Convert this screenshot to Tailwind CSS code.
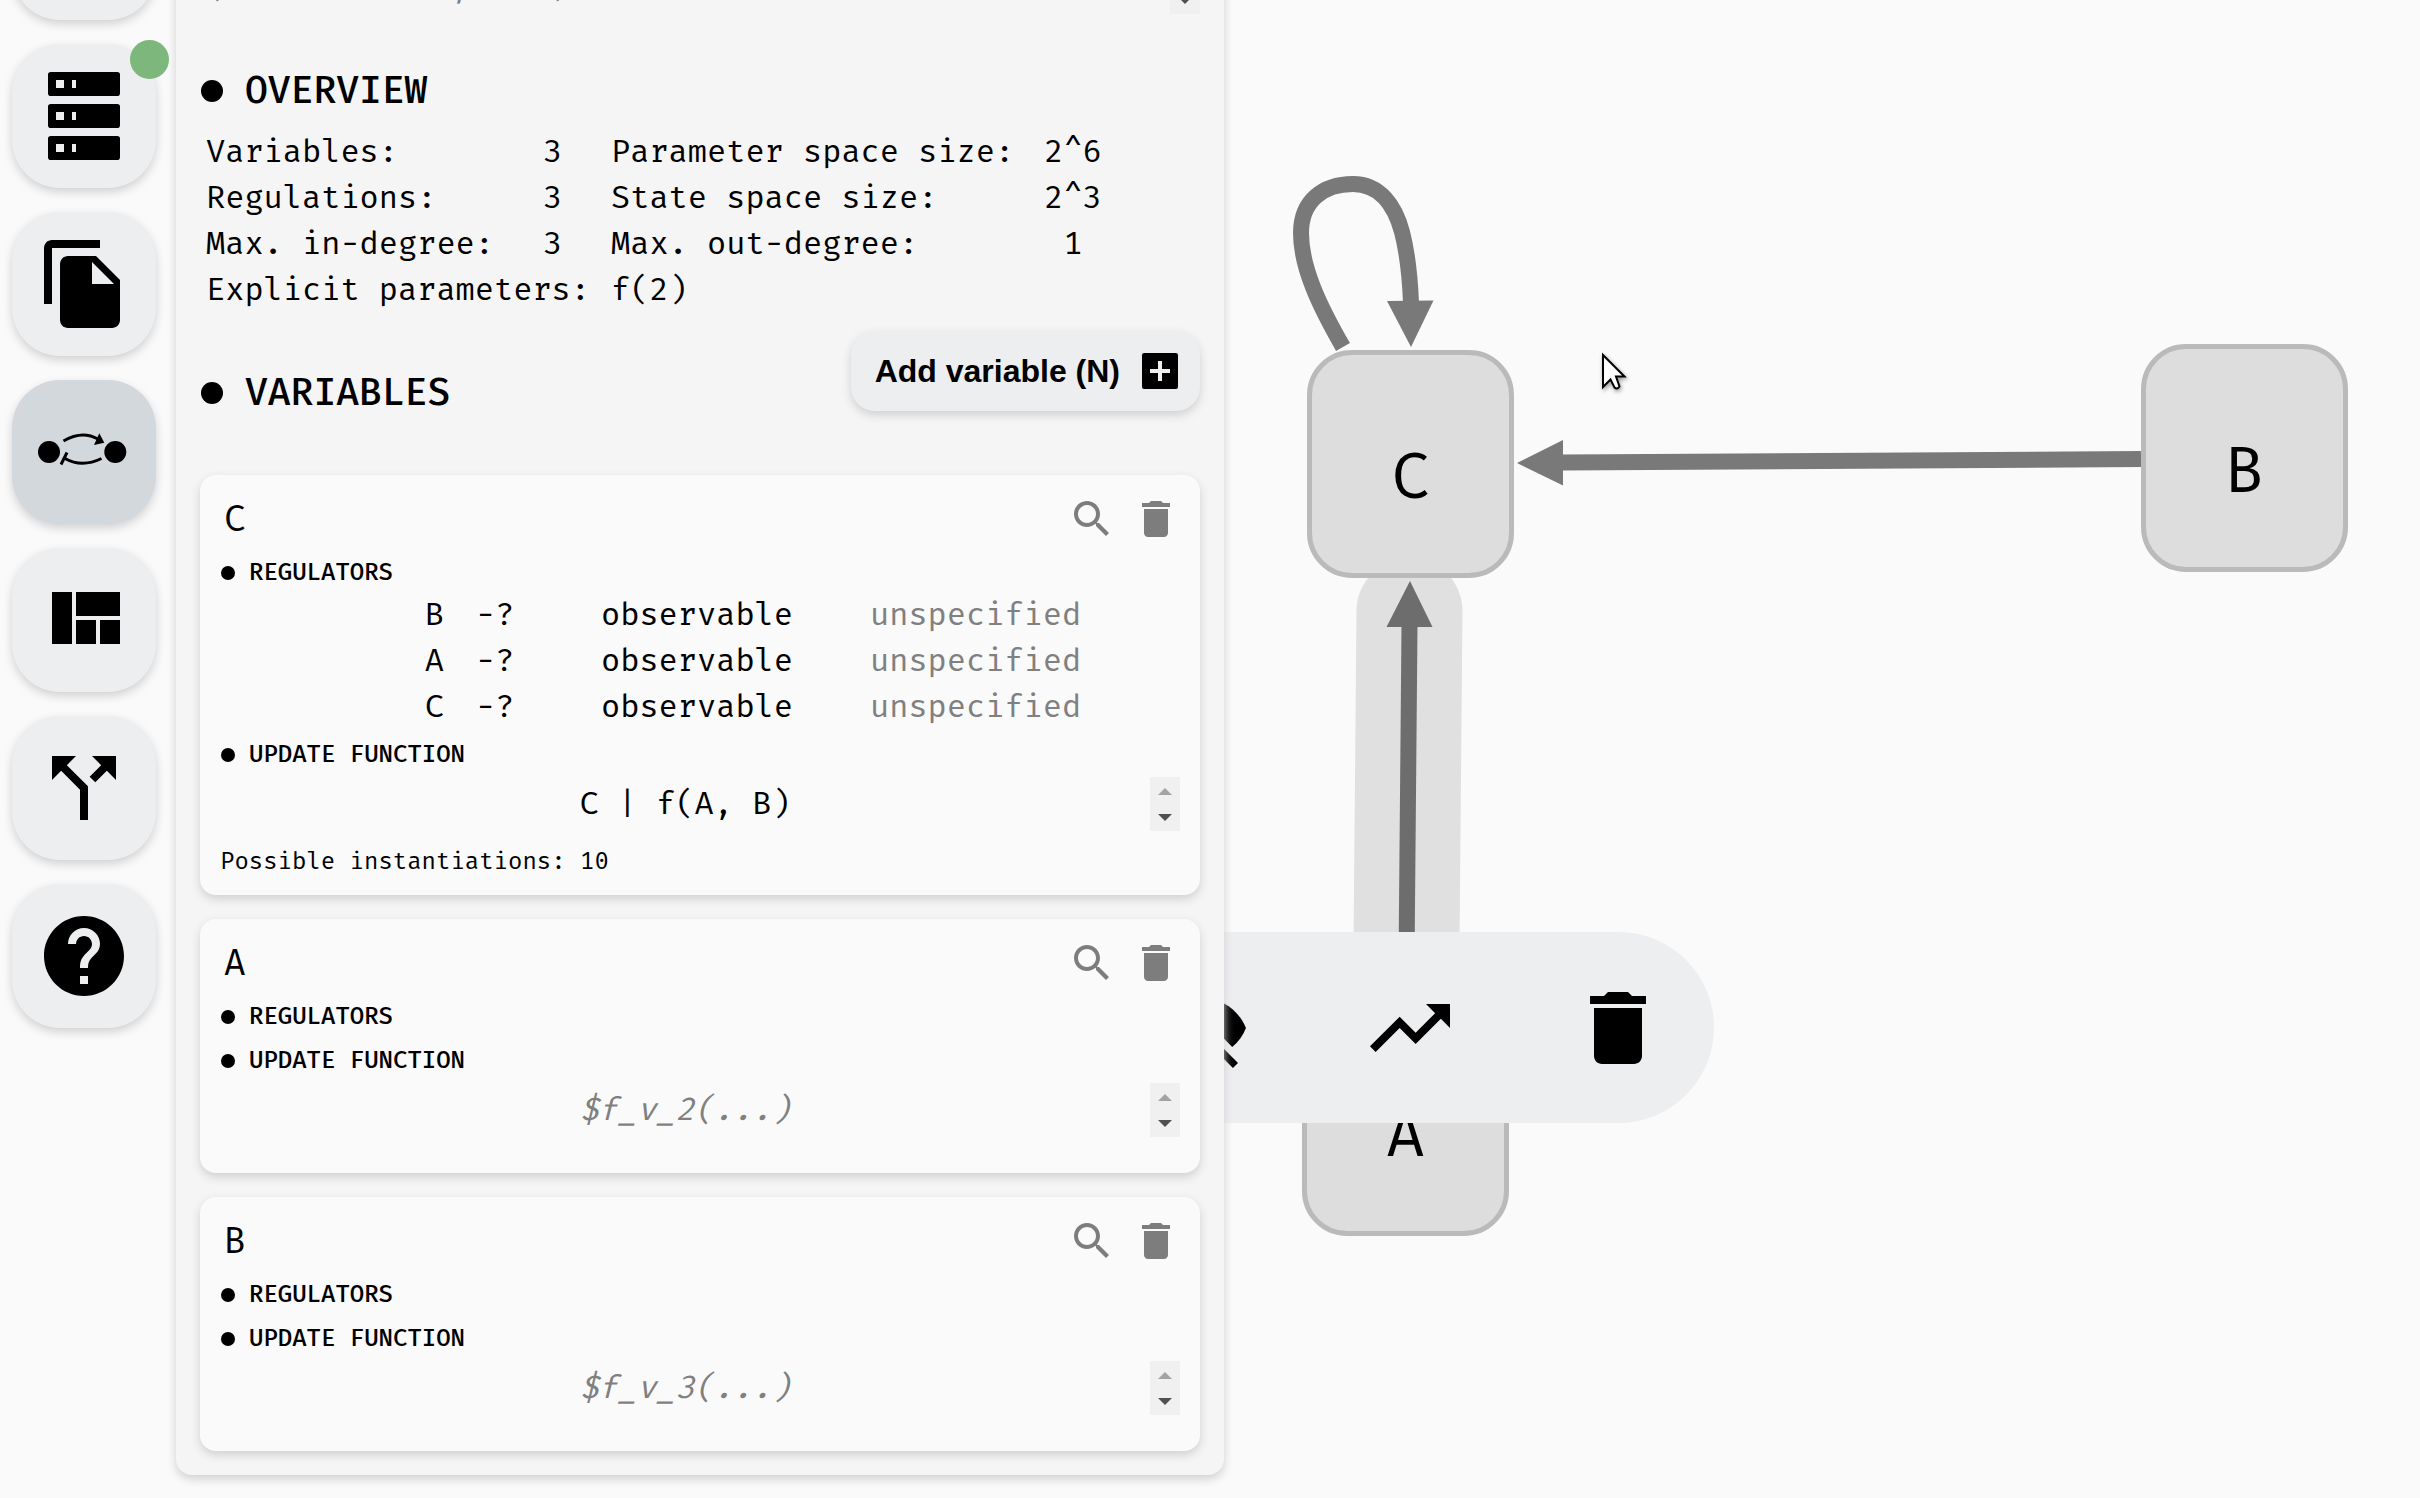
<!DOCTYPE html>
<html lang="en">
<head>
<meta charset="utf-8">
<meta name="viewport" content="width=device-width, initial-scale=1">
<title>Model editor</title>
<script src="https://cdn.jsdelivr.net/npm/@tailwindcss/browser@4"></script>
</head>
<body class="flex h-screen gap-5 overflow-hidden bg-[#fafafa] pl-3 font-['Fira_Mono','Liberation_Mono',monospace] text-[32px] leading-[46px] text-black">

<!-- shared icon shapes -->
<svg class="hidden" aria-hidden="true">
  <symbol id="search" viewBox="0 0 24 24"><path d="M15.5 14h-.79l-.28-.27C15.41 12.59 16 11.11 16 9.5 16 5.91 13.09 3 9.5 3S3 5.91 3 9.5 5.91 16 9.5 16c1.61 0 3.09-.59 4.23-1.57l.27.28v.79l5 4.99L20.49 19l-4.99-5zm-6 0C7.01 14 5 11.99 5 9.5S7.01 5 9.5 5 14 7.01 14 9.5 11.99 14 9.5 14z"/></symbol>
  <symbol id="trash" viewBox="0 0 24 24"><path d="M6 19c0 1.1.9 2 2 2h8c1.1 0 2-.9 2-2V7H6v12zM19 4h-3.5l-1-1h-5l-1 1H5v2h14V4z"/></symbol>
  <symbol id="arrows" viewBox="0 0 30 54"><path fill="#a3a3a3" d="M8 18l7-7 7 7z"/><path fill="#505050" d="M8 37h14l-7 7z"/></symbol>
</svg>

<nav class="-mt-[124px] flex w-36 shrink-0 flex-col gap-6" aria-label="Sections">
  <button class="size-36 shrink-0 rounded-[48px] bg-[#edeef0] shadow-[0_4px_10px_#d0d0d0]" aria-label="Engine"></button>
  <button class="relative flex size-36 shrink-0 items-center justify-center rounded-[48px] bg-[#edeef0] shadow-[0_4px_10px_#d0d0d0]" aria-label="Results">
    <svg class="size-24" viewBox="0 0 24 24" fill-rule="evenodd"><path d="M3.7 1h16.6q.7 0 .7.7v4.6q0 .7-.7.7H3.7q-.7 0-.7-.7V1.7q0-.7.7-.7zM5 3v2h2V3zM9 3v2h1V3zM3.7 9h16.6q.7 0 .7.7v4.6q0 .7-.7.7H3.7q-.7 0-.7-.7V9.7q0-.7.7-.7zM5 11v2h2v-2zM9 11v2h1v-2zM3.7 17h16.6q.7 0 .7.7v4.6q0 .7-.7.7H3.7q-.7 0-.7-.7v-4.6q0-.7.7-.7zM5 19v2h2v-2zM9 19v2h1v-2z"/></svg>
    <span class="absolute -top-1 -right-[13px] size-[39px] rounded-full bg-[#7db77b]"></span>
  </button>
  <button class="flex size-36 shrink-0 items-center justify-center rounded-[48px] bg-[#edeef0] shadow-[0_4px_10px_#d0d0d0]" aria-label="Import and export">
    <svg class="size-24" viewBox="0 0 24 24"><path d="M16 1H4c-1.1 0-2 .9-2 2v14h2V3h12V1zm-1 4l6 6v10c0 1.1-.9 2-2 2H7.99C6.89 23 6 22.1 6 21l.01-14c0-1.1.89-2 1.99-2h7zm-1 7h5.5L14 6.5V12z"/></svg>
  </button>
  <button class="flex size-36 shrink-0 items-center justify-center rounded-[48px] bg-[#d3d8dc] shadow-[0_4px_10px_#d0d0d0]" aria-label="Model editor" aria-current="page">
    <svg class="size-24" viewBox="0 0 96 96"><circle cx="13" cy="48" r="11"/><circle cx="79.300" cy="48" r="11"/><path fill="none" stroke="#000" stroke-width="3" d="M27.500 37Q46 26 62 35M65.500 54.500Q46 64 29 54.500M25 60.500L31 48.500"/><path d="M68.300 38.700L63.300 29.300 58 41z"/></svg>
  </button>
  <button class="flex size-36 shrink-0 items-center justify-center rounded-[48px] bg-[#edeef0] shadow-[0_4px_10px_#d0d0d0]" aria-label="Layouts">
    <svg class="size-24" viewBox="0 0 24 24"><path d="M10 18h5v-6h-5v6zm-6 0h5V5H4v13zm12 0h5v-6h-5v6zM10 5v6h11V5H10z"/></svg>
  </button>
  <button class="flex size-36 shrink-0 items-center justify-center rounded-[48px] bg-[#edeef0] shadow-[0_4px_10px_#d0d0d0]" aria-label="Bifurcations">
    <svg class="size-24" viewBox="0 0 24 24"><path d="M14 4l2.29 2.29-2.88 2.88 1.42 1.42 2.88-2.88L20 10V4zm-4 0H4v6l2.29-2.29 4.71 4.7V20h2v-8.41l-5.29-5.3z"/></svg>
  </button>
  <button class="flex size-36 shrink-0 items-center justify-center rounded-[48px] bg-[#edeef0] shadow-[0_4px_10px_#d0d0d0]" aria-label="Help">
    <svg class="size-24" viewBox="0 0 24 24"><path d="M12 2C6.48 2 2 6.48 2 12s4.48 10 10 10 10-4.48 10-10S17.52 2 12 2zm1 17h-2v-2h2v2zm2.07-7.75l-.9.92C13.45 12.9 13 13.5 13 15h-2v-.5c0-1.1.45-2.1 1.17-2.83l1.24-1.26c.37-.36.59-.86.59-1.41 0-1.1-.9-2-2-2s-2 .9-2 2H8c0-2.21 1.79-4 4-4s4 1.79 4 4c0 .88-.36 1.68-.93 2.25z"/></svg>
  </button>
</nav>

<main class="relative z-10 -mt-10 w-[1048px] shrink-0 self-start rounded-2xl bg-[#f5f5f5] px-6 pb-6 shadow-[0_4px_10px_#d0d0d0]">
  <div class="flex">
    <textarea class="h-[54px] min-w-0 flex-1 resize-none overflow-hidden px-1.5 leading-[52px] placeholder:text-[#808080] placeholder:italic" placeholder="(model description)" aria-label="Model description"></textarea>
    <svg class="h-[54px] w-[30px] bg-[#f0f0f0]" aria-hidden="true"><use href="#arrows"/></svg>
  </div>

  <h2 class="mt-[53px] ml-px flex items-center gap-[22px] text-[38px] font-medium"><span class="mt-0.5 size-[22px] rounded-full bg-black"></span>OVERVIEW</h2>
  <table class="mt-[15px] ml-1.5 table-fixed text-left whitespace-nowrap">
    <colgroup><col class="w-[320px]"><col class="w-[85px]"><col class="w-[405px]"><col class="w-[114px]"></colgroup>
    <tbody>
      <tr><th class="font-normal">Variables:</th><td class="pr-8 text-center">3</td><th class="font-normal">Parameter space size:</th><td class="text-center">2^6</td></tr>
      <tr><th class="font-normal">Regulations:</th><td class="pr-8 text-center">3</td><th class="font-normal">State space size:</th><td class="text-center">2^3</td></tr>
      <tr><th class="font-normal">Max. in-degree:</th><td class="pr-8 text-center">3</td><th class="font-normal">Max. out-degree:</th><td class="text-center">1</td></tr>
      <tr><th class="font-normal" colspan="2">Explicit parameters:</th><td colspan="2">f(2)</td></tr>
    </tbody>
  </table>

  <div class="mt-[19px] flex items-start justify-between">
    <h2 class="mt-[38px] ml-px flex items-center gap-[22px] text-[38px] font-medium"><span class="mt-0.5 size-[22px] rounded-full bg-black"></span>VARIABLES</h2>
    <button class="flex h-20 items-center gap-4 rounded-3xl bg-[#edeef0] pr-4 pl-6 font-['Liberation_Sans',sans-serif] font-bold shadow-[0_4px_10px_#d0d0d0]">Add variable (N)
      <svg class="size-12" viewBox="0 0 24 24"><path d="M20 3H4q-1 0-1 1v16q0 1 1 1h16q1 0 1-1V4q0-1-1-1zm-3 10h-4v4h-2v-4H7v-2h4V7h2v4h4v2z"/></svg>
    </button>
  </div>

  <div class="mt-15 flex flex-col gap-6">
    <article class="rounded-2xl bg-[#fafafa] p-5 shadow-[0_4px_10px_#d0d0d0]">
      <div class="flex h-12 gap-4">
        <input class="h-12 min-w-0 flex-1 px-1 text-[36px]" value="C" aria-label="Variable name">
        <button class="size-12" aria-label="Find C"><svg class="size-12 fill-[#7d7d7d]"><use href="#search"/></svg></button>
        <button class="size-12" aria-label="Remove C"><svg class="size-12 fill-[#7d7d7d]"><use href="#trash"/></svg></button>
      </div>
      <h3 class="mt-2.5 ml-px flex items-center gap-[14px] text-2xl leading-[38px] font-medium"><span class="mt-0.5 size-[14px] rounded-full bg-black"></span>REGULATORS</h3>
      <table class="table-fixed text-left">
        <colgroup><col class="w-64"><col class="w-[125px]"><col class="w-[269px]"><col class="w-[212px]"></colgroup>
        <tbody>
          <tr><th class="pr-8 text-right font-normal">B</th><td>-?</td><td>observable</td><td class="text-[#808080]">unspecified</td></tr>
          <tr><th class="pr-8 text-right font-normal">A</th><td>-?</td><td>observable</td><td class="text-[#808080]">unspecified</td></tr>
          <tr><th class="pr-8 text-right font-normal">C</th><td>-?</td><td>observable</td><td class="text-[#808080]">unspecified</td></tr>
        </tbody>
      </table>
      <h3 class="mt-1.5 ml-px flex items-center gap-[14px] text-2xl leading-[38px] font-medium"><span class="mt-0.5 size-[14px] rounded-full bg-black"></span>UPDATE FUNCTION</h3>
      <div class="mt-1 flex">
        <textarea class="h-[54px] min-w-0 flex-1 resize-none overflow-hidden text-center leading-[52px]" aria-label="Update function of C">C | f(A, B)</textarea>
        <svg class="h-[54px] w-[30px] bg-[#f0f0f0]" aria-hidden="true"><use href="#arrows"/></svg>
      </div>
      <p class="mt-4 text-2xl leading-7">Possible instantiations: 10</p>
    </article>

    <article class="rounded-2xl bg-[#fafafa] p-5 shadow-[0_4px_10px_#d0d0d0]">
      <div class="flex h-12 gap-4">
        <input class="h-12 min-w-0 flex-1 px-1 text-[36px]" value="A" aria-label="Variable name">
        <button class="size-12" aria-label="Find A"><svg class="size-12 fill-[#7d7d7d]"><use href="#search"/></svg></button>
        <button class="size-12" aria-label="Remove A"><svg class="size-12 fill-[#7d7d7d]"><use href="#trash"/></svg></button>
      </div>
      <h3 class="mt-2.5 ml-px flex items-center gap-[14px] text-2xl leading-[38px] font-medium"><span class="mt-0.5 size-[14px] rounded-full bg-black"></span>REGULATORS</h3>
      <h3 class="mt-1.5 ml-px flex items-center gap-[14px] text-2xl leading-[38px] font-medium"><span class="mt-0.5 size-[14px] rounded-full bg-black"></span>UPDATE FUNCTION</h3>
      <div class="mt-1 mb-4 flex">
        <textarea class="h-[54px] min-w-0 flex-1 resize-none overflow-hidden text-center leading-[52px] placeholder:text-[#808080] placeholder:italic" placeholder="$f_v_2(...)" aria-label="Update function of A"></textarea>
        <svg class="h-[54px] w-[30px] bg-[#f0f0f0]" aria-hidden="true"><use href="#arrows"/></svg>
      </div>
    </article>

    <article class="rounded-2xl bg-[#fafafa] p-5 shadow-[0_4px_10px_#d0d0d0]">
      <div class="flex h-12 gap-4">
        <input class="h-12 min-w-0 flex-1 px-1 text-[36px]" value="B" aria-label="Variable name">
        <button class="size-12" aria-label="Find B"><svg class="size-12 fill-[#7d7d7d]"><use href="#search"/></svg></button>
        <button class="size-12" aria-label="Remove B"><svg class="size-12 fill-[#7d7d7d]"><use href="#trash"/></svg></button>
      </div>
      <h3 class="mt-2.5 ml-px flex items-center gap-[14px] text-2xl leading-[38px] font-medium"><span class="mt-0.5 size-[14px] rounded-full bg-black"></span>REGULATORS</h3>
      <h3 class="mt-1.5 ml-px flex items-center gap-[14px] text-2xl leading-[38px] font-medium"><span class="mt-0.5 size-[14px] rounded-full bg-black"></span>UPDATE FUNCTION</h3>
      <div class="mt-1 mb-4 flex">
        <textarea class="h-[54px] min-w-0 flex-1 resize-none overflow-hidden text-center leading-[52px] placeholder:text-[#808080] placeholder:italic" placeholder="$f_v_3(...)" aria-label="Update function of B"></textarea>
        <svg class="h-[54px] w-[30px] bg-[#f0f0f0]" aria-hidden="true"><use href="#arrows"/></svg>
      </div>
    </article>
  </div>
</main>

<!-- regulatory graph canvas -->
<section class="relative -ml-5 min-w-0 flex-1 text-[64px] leading-none" aria-label="Regulatory graph">
  <svg class="absolute inset-0 size-full" aria-hidden="true">
    <path d="M185.500 611L182 1000" fill="none" stroke="#e0e0e0" stroke-width="106" stroke-linecap="round"/>
    <path d="M185.500 625L182 1020" fill="none" stroke="#6d6d6d" stroke-width="16"/>
    <path d="M186 581L162.500 627H208.500z" fill="#6d6d6d"/>
    <path d="M917 459L338 462.500" fill="none" stroke="#797979" stroke-width="16"/>
    <path d="M293 463L339 440V485.500z" fill="#797979"/>
  </svg>
  <div class="absolute top-[350px] left-[83px] flex h-[228px] w-[207px] items-center justify-center rounded-[45px] border-[5px] border-[#bababa] bg-[#ddd] pt-[26px]">C</div>
  <div class="absolute top-[344px] left-[917px] flex h-[228px] w-[207px] items-center justify-center rounded-[45px] border-[5px] border-[#bababa] bg-[#ddd] pt-[26px]">B</div>
  <div class="absolute top-[1008px] left-[78px] flex h-[228px] w-[207px] items-center justify-center rounded-[45px] border-[5px] border-[#bababa] bg-[#ddd] pt-[26px]">A</div>
  <svg class="absolute inset-0 size-full" aria-hidden="true">
    <path d="M119 347C96 307 77 268 77 233 77 201 99 184 129 184 156 184 171 206 178 232 184 255 186 278 187 303" fill="none" stroke="#797979" stroke-width="16"/>
    <path d="M163 301L209.500 300.500 187 347z" fill="#797979"/>
  </svg>
  <div class="absolute top-[932px] -left-[118px] flex h-[191px] items-center gap-28 rounded-full bg-[#edeef0] px-12" role="toolbar" aria-label="Regulation actions">
    <button class="size-24" aria-label="Toggle observability"><svg class="size-24" viewBox="0 0 24 24"><path d="M12 7c2.76 0 5 2.24 5 5 0 .65-.13 1.26-.36 1.83l2.92 2.92c1.51-1.26 2.7-2.89 3.43-4.75-1.73-4.39-6-7.5-11-7.5-1.4 0-2.74.25-3.98.7l2.16 2.16C10.74 7.13 11.35 7 12 7zM2 4.27l2.28 2.28.46.46C3.08 8.3 1.78 10.02 1 12c1.73 4.39 6 7.5 11 7.5 1.55 0 3.03-.3 4.38-.84l.42.42L19.73 22 21 20.73 3.27 3 2 4.27zM7.53 9.8l1.55 1.55c-.05.21-.08.43-.08.65 0 1.66 1.34 3 3 3 .22 0 .44-.03.65-.08l1.55 1.55c-.67.33-1.41.53-2.2.53-2.76 0-5-2.24-5-5 0-.79.2-1.53.53-2.2zm4.31-.78l3.15 3.15.02-.16c0-1.66-1.34-3-3-3l-.17.01z"/></svg></button>
    <button class="size-24" aria-label="Toggle monotonicity"><svg class="size-24" viewBox="0 0 24 24"><path d="M16 6l2.29 2.29-4.88 4.88-4-4L2 16.59 3.41 18l6-6 4 4 6.3-6.29L22 12V6z"/></svg></button>
    <button class="size-24" aria-label="Remove regulation"><svg class="size-24"><use href="#trash"/></svg></button>
  </div>
  <svg class="absolute top-[350px] left-[376px] h-12 w-8 drop-shadow-[1px_2px_2px_#0006]" viewBox="0 0 32 48" aria-hidden="true"><path d="M3 5V37L10.500 29.500 14.500 37.500Q17 40 19.500 36.500L16 26.500H24.500z" fill="#fff" stroke="#000" stroke-width="2"/></svg>
</section>
</body>
</html>
